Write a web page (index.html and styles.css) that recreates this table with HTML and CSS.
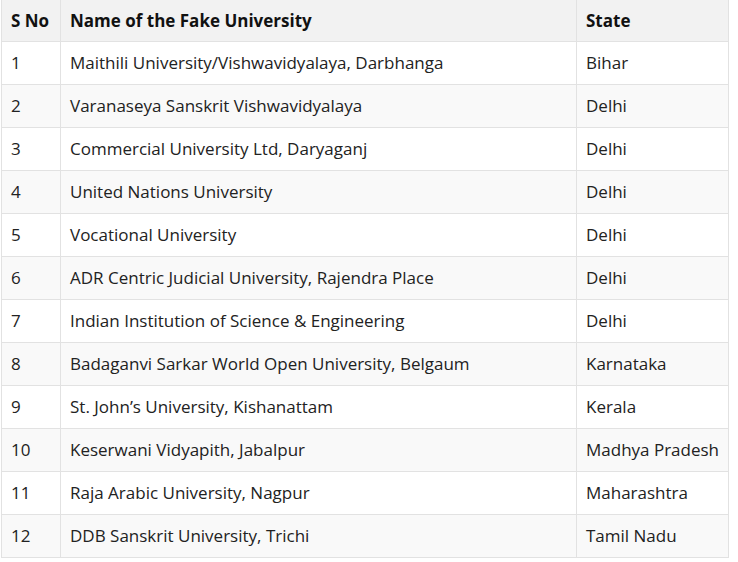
FILE: index.html
```html
<!DOCTYPE html>
<html>
<head>
<meta charset="utf-8">
<link rel="stylesheet" href="styles.css">
</head>
<body>
<table class="fake-table">
  <colgroup>
    <col class="c-sno">
    <col class="c-name">
    <col class="c-state">
  </colgroup>
  <thead>
    <tr><th>S No</th><th>Name of the Fake University</th><th>State</th></tr>
  </thead>
  <tbody>
    <tr><td>1</td><td>Maithili University/Vishwavidyalaya, Darbhanga</td><td>Bihar</td></tr>
    <tr><td>2</td><td>Varanaseya Sanskrit Vishwavidyalaya</td><td>Delhi</td></tr>
    <tr><td>3</td><td>Commercial University Ltd, Daryaganj</td><td>Delhi</td></tr>
    <tr><td>4</td><td>United Nations University</td><td>Delhi</td></tr>
    <tr><td>5</td><td>Vocational University</td><td>Delhi</td></tr>
    <tr><td>6</td><td>ADR Centric Judicial University, Rajendra Place</td><td>Delhi</td></tr>
    <tr><td>7</td><td>Indian Institution of Science &amp; Engineering</td><td>Delhi</td></tr>
    <tr><td>8</td><td>Badaganvi Sarkar World Open University, Belgaum</td><td>Karnataka</td></tr>
    <tr><td>9</td><td>St. John’s University, Kishanattam</td><td>Kerala</td></tr>
    <tr><td>10</td><td>Keserwani Vidyapith, Jabalpur</td><td>Madhya Pradesh</td></tr>
    <tr><td>11</td><td>Raja Arabic University, Nagpur</td><td>Maharashtra</td></tr>
    <tr><td>12</td><td>DDB Sanskrit University, Trichi</td><td>Tamil Nadu</td></tr>
  </tbody>
</table>
</body>
</html>
```

FILE: styles.css
```css
html, body {
  margin: 0;
  padding: 0;
  background: #ffffff;
}
body {
  font-family: "Open Sans", "Noto Sans", sans-serif;
  font-size: 17px;
  color: #222;
  padding-left: 1px;
}
.fake-table {
  border-collapse: collapse;
  width: 727px;
  table-layout: fixed;
}
.c-sno { width: 59px; }
.c-name { width: 516px; }
.c-state { width: 152px; }
.fake-table th,
.fake-table td {
  border: 1px solid #e2e2e2;
  padding: 0 9px;
  height: 42px;
  text-align: left;
  vertical-align: middle;
  white-space: nowrap;
  line-height: 22px;
}
.fake-table thead tr th {
  border-top: none;
  height: 41px;
  background: #f2f2f2;
  font-weight: 700;
  color: #111;
}
.fake-table tbody tr:nth-child(even) td {
  background: #f9f9f9;
}
```
